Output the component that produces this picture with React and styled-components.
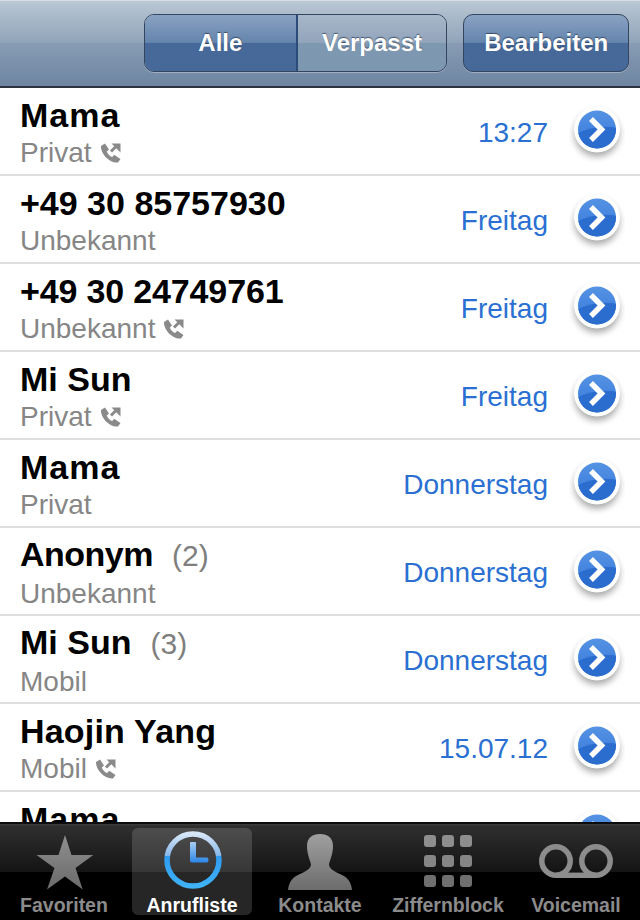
import React from 'react';
import styled, { createGlobalStyle } from 'styled-components';

const calls = [
  { name: 'Mama', track: 1, sub: 'Privat', time: '13:27', phone: true },
  { name: '+49 30 85757930', sub: 'Unbekannt', time: 'Freitag' },
  { name: '+49 30 24749761', track: -0.15, sub: 'Unbekannt', time: 'Freitag', phone: true },
  { name: 'Mi Sun', sub: 'Privat', time: 'Freitag', phone: true },
  { name: 'Mama', track: 1, sub: 'Privat', time: 'Donnerstag' },
  { name: 'Anonym', track: -0.5, count: 2, sub: 'Unbekannt', time: 'Donnerstag' },
  { name: 'Mi Sun', count: 3, sub: 'Mobil', time: 'Donnerstag' },
  { name: 'Haojin Yang', track: 0.2, sub: 'Mobil', time: '15.07.12', phone: true },
  // last row runs under the tab bar, only the name shows
  { name: 'Mama', track: 1 },
];

const GlobalStyle = createGlobalStyle`
  html, body { margin: 0; padding: 0; }
  body { font-family: "Liberation Sans", Arial, sans-serif; background: #fff; }
`;

const Phone = styled.div`
  width: 640px;
  height: 920px;
  display: flex;
  flex-direction: column;
  overflow: hidden;
`;

const NavBar = styled.div`
  height: 88px;
  flex: none;
  box-sizing: border-box;
  padding: 13px 11px 0 144px;
  display: flex;
  gap: 16px;
  align-items: flex-start;
  border-top: 1px solid #d5dce3;
  border-bottom: 2px solid #2c3440;
  background: linear-gradient(#bac7d4 0%, #8fa3b9 50%, #879cb4 50%, #6e85a1 100%);
`;

const Segmented = styled.div`
  display: flex;
  width: 304px;
  height: 58px;
  box-sizing: border-box;
  border: 1px solid #34465f;
  border-radius: 10px;
  overflow: hidden;
  box-shadow: 0 1px 0 rgba(255, 255, 255, 0.3);
`;

const blueFill = 'linear-gradient(#8aa2c2 0%, #6485ad 49%, #46699a 50%, #46699a 100%)';
const paleFill = 'linear-gradient(#a8b6c9 0%, #92a5bc 49%, #7e98b2 50%, #7d97b1 100%)';

const Segment = styled.div`
  width: ${(p) => p.$width}px;
  display: flex;
  align-items: center;
  justify-content: center;
  color: #fff;
  font-size: 24px;
  font-weight: 700;
  text-shadow: 0 -1px 1px rgba(40, 55, 80, 0.75);
  background: ${(p) => (p.$active ? blueFill : paleFill)};
  border-right: ${(p) => (p.$active ? '2px solid #2b4c78' : 'none')};
  box-sizing: border-box;
`;

const EditButton = styled.div`
  width: 166px;
  height: 58px;
  box-sizing: border-box;
  border: 1px solid #34465f;
  border-radius: 10px;
  display: flex;
  align-items: center;
  justify-content: center;
  color: #fff;
  font-size: 24px;
  font-weight: 700;
  text-shadow: 0 -1px 1px rgba(40, 55, 80, 0.75);
  background: ${blueFill};
  box-shadow: 0 1px 0 rgba(255, 255, 255, 0.3);
`;

const List = styled.div`
  flex: 1;
  min-height: 0;
  overflow: hidden;
  background: #fff;
`;

const Row = styled.div`
  height: 88px;
  box-sizing: border-box;
  border-bottom: 2px solid #dedede;
  display: flex;
  align-items: center;
  padding: 0 15px 0 20px;
`;

const Info = styled.div`
  flex: 1;
  min-width: 0;
  padding-top: 5px;
`;

const Name = styled.div`
  font-size: 34px;
  font-weight: 700;
  line-height: 38px;
  color: #000;
  margin-bottom: 1px;
  display: flex;
  align-items: baseline;
`;

const NameText = styled.span`
  letter-spacing: ${(p) => p.$track || 0}px;
`;

const Count = styled.span`
  font-size: 30px;
  font-weight: 400;
  color: #7f7f7f;
  margin-left: 19px;
`;

const Sub = styled.div`
  font-size: 28px;
  line-height: 36px;
  min-height: 36px;
  color: #868686;
  display: flex;
  align-items: center;
  gap: 8px;
`;

const Time = styled.div`
  font-size: 28px;
  color: #2a70d2;
  margin: 4px 21px 0 0;
`;

const TabBar = styled.div`
  height: 98px;
  flex: none;
  box-sizing: border-box;
  border-top: 2px solid #0c0c0c;
  padding: 4px 0 5px;
  display: grid;
  grid-template-columns: repeat(5, 128px);
  background: linear-gradient(#3e3e3e 0, #2f2f2f 2px, #141414 48px, #000 48px, #000 100%);
`;

const Tab = styled.div`
  margin: 0 4px;
  border-radius: 6px;
  display: flex;
  flex-direction: column;
  align-items: center;
  justify-content: space-between;
  background: ${(p) => (p.$active ? 'rgba(255, 255, 255, 0.15)' : 'transparent')};
`;

const TabIcon = styled.div`
  height: 66px;
  display: flex;
  align-items: center;
  justify-content: center;
`;

const TabLabel = styled.div`
  font-size: 19.5px;
  font-weight: 700;
  line-height: 20px;
  color: ${(p) => (p.$active ? '#fff' : '#8b8b8b')};
  white-space: nowrap;
`;

function CallIcon() {
  return (
    <svg width="22" height="22" viewBox="0 0 22 22">
      <path
        d="M1 4 L5 1.5 L9 7.5 L6.8 9.5 C7.5 11.8 9.7 14.2 12.2 15 L14.2 12.8 L20.5 17 L18 20.5 C10 21.5 0.5 12 1 4 Z"
        fill="#8a8a8a"
      />
      <path d="M11 9.5 L17.5 3" stroke="#8a8a8a" strokeWidth="3" fill="none" />
      <path d="M11.5 1.5 H20.5 V10.5 Z" fill="#8a8a8a" />
    </svg>
  );
}

function Disclosure({ id }) {
  return (
    <svg width="56" height="64" viewBox="0 0 56 64">
      <defs>
        <linearGradient id={`fill${id}`} x1="0" y1="0" x2="0" y2="1">
          <stop offset="0" stopColor="#5592e4" />
          <stop offset="0.55" stopColor="#4484de" />
          <stop offset="1" stopColor="#3a7bda" />
        </linearGradient>
        <filter id={`blur${id}`} x="-30%" y="-30%" width="160%" height="160%">
          <feGaussianBlur stdDeviation="3.5" />
        </filter>
        <clipPath id={`clip${id}`}>
          <circle cx="28" cy="30.5" r="19" />
        </clipPath>
      </defs>
      <circle cx="28" cy="35" r="22.5" fill="#000" opacity="0.35" filter={`url(#blur${id})`} />
      <circle cx="28" cy="30.5" r="23" fill="#fff" />
      <circle cx="28" cy="30.5" r="19" fill={`url(#fill${id})`} />
      <path
        d="M7 35 Q28 25 49 29 V52 H7 Z"
        fill="#2a6dcf"
        clipPath={`url(#clip${id})`}
      />
      <path d="M22 20 L32.5 30.5 L22 41" stroke="#fff" strokeWidth="5.5" fill="none" />
    </svg>
  );
}

function StarIcon() {
  return (
    <svg width="60" height="60" viewBox="0 -4 60 60">
      <defs>
        <linearGradient id="tabGray" x1="0" y1="0" x2="0" y2="1">
          <stop offset="0" stopColor="#8f8f8f" />
          <stop offset="1" stopColor="#6a6a6a" />
        </linearGradient>
      </defs>
      <path d="M31 0 L37.5 20 L59.3 20 L41.5 33 L48.7 54.5 L31 41.5 L13 54.5 L20.5 33 L2.5 20 L24.5 20 Z" fill="url(#tabGray)" />
    </svg>
  );
}

function ClockIcon() {
  return (
    <svg width="60" height="60" viewBox="0 0 60 60">
      <defs>
        <linearGradient id="clockRing" x1="0" y1="0" x2="0" y2="1">
          <stop offset="0" stopColor="#d6e6f7" />
          <stop offset="0.42" stopColor="#86b6e8" />
          <stop offset="0.42" stopColor="#2e9bf0" />
          <stop offset="1" stopColor="#3fb2f8" />
        </linearGradient>
        <linearGradient id="clockHand" x1="0" y1="0" x2="0" y2="1">
          <stop offset="0" stopColor="#a9cdf2" />
          <stop offset="1" stopColor="#2c86e8" />
        </linearGradient>
      </defs>
      <circle cx="31" cy="29" r="26" fill="none" stroke="url(#clockRing)" strokeWidth="5.5" />
      <path
        d="M28 12 Q28 11 29 11 H33 Q34 11 34 12 V26.5 H45 Q46.5 26.5 46.5 28.5 Q46.5 31.5 45 31.5 H30 Q28 31.5 28 29.5 Z"
        fill="url(#clockHand)"
      />
    </svg>
  );
}

function PersonIcon() {
  return (
    <svg width="64" height="60" viewBox="0 -3 64 60">
      <defs>
        <linearGradient id="personGray" x1="0" y1="0" x2="0" y2="1">
          <stop offset="0" stopColor="#a0a0a0" />
          <stop offset="1" stopColor="#6c6c6c" />
        </linearGradient>
      </defs>
      <path
        d="M32 0 C40 0 45 4 45 12 C45 20 42 26 41 30 C41 35 46 37 52 40 C59 43 63 47 64 56 H0 C1 47 5 43 12 40 C18 37 23 35 23 30 C22 26 19 20 19 12 C19 4 24 0 32 0 Z"
        fill="url(#personGray)"
      />
    </svg>
  );
}

const KeyGrid = styled.div`
  display: grid;
  grid-template-columns: repeat(3, 12px);
  grid-auto-rows: 12px;
  gap: 8px 6px;
`;

const Key = styled.div`
  border-radius: 3px;
  background: ${(p) => p.$shade};
`;

function KeypadIcon() {
  const shades = ['#8e8e8e', '#8e8e8e', '#8e8e8e', '#858585', '#858585', '#858585', '#6f6f6f', '#6f6f6f', '#6f6f6f'];
  return (
    <KeyGrid>
      {shades.map((s, i) => (
        <Key key={i} $shade={s} />
      ))}
    </KeyGrid>
  );
}

function VoicemailIcon() {
  return (
    <svg width="74" height="34" viewBox="0 0 74 34">
      <g fill="none" stroke="#8c8c8c" strokeWidth="5.5">
        <circle cx="17" cy="17" r="14.2" />
        <circle cx="57" cy="17" r="14.2" />
        <path d="M17 31.2 H57" />
      </g>
    </svg>
  );
}

const tabs = [
  { label: 'Favoriten', icon: <StarIcon /> },
  { label: 'Anrufliste', icon: <ClockIcon />, active: true },
  { label: 'Kontakte', icon: <PersonIcon /> },
  { label: 'Ziffernblock', icon: <KeypadIcon /> },
  { label: 'Voicemail', icon: <VoicemailIcon /> },
];

export default function App() {
  return (
    <Phone>
      <GlobalStyle />
      <NavBar>
        <Segmented>
          <Segment $active $width={154}>Alle</Segment>
          <Segment $width={150}>Verpasst</Segment>
        </Segmented>
        <EditButton>Bearbeiten</EditButton>
      </NavBar>
      <List>
        {calls.map((c, i) => (
          <Row key={i}>
            <Info>
              <Name>
                <NameText $track={c.track}>{c.name}</NameText>
                {c.count && <Count>({c.count})</Count>}
              </Name>
              <Sub>
                {c.sub}
                {c.phone && <CallIcon />}
              </Sub>
            </Info>
            {c.time && <Time>{c.time}</Time>}
            <Disclosure id={i} />
          </Row>
        ))}
      </List>
      <TabBar>
        {tabs.map((t) => (
          <Tab key={t.label} $active={t.active}>
            <TabIcon>{t.icon}</TabIcon>
            <TabLabel $active={t.active}>{t.label}</TabLabel>
          </Tab>
        ))}
      </TabBar>
    </Phone>
  );
}
